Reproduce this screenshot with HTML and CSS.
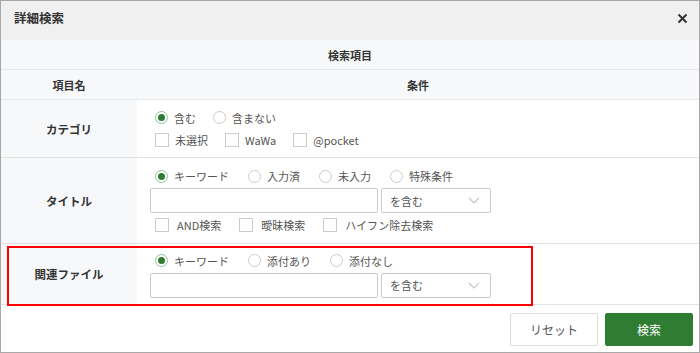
FILE: index.html
```html
<!DOCTYPE html>
<html lang="ja">
<head>
<meta charset="utf-8">
<title>詳細検索</title>
<link rel="stylesheet" href="styles.css">
</head>
<body>
<div class="dialog">
  <div class="dlg-head">
    <span class="dlg-title">詳細検索</span>
    <svg class="close" width="11" height="11" viewBox="0 0 11 11"><path d="M1.5 1.5l8 8M9.5 1.5l-8 8" stroke="#333" stroke-width="2" fill="none"/></svg>
  </div>

  <table class="search">
    <tr class="th-row">
      <th colspan="2">検索項目</th>
    </tr>
    <tr class="th-row">
      <th class="col-name">項目名</th>
      <th>条件</th>
    </tr>
    <tr class="row-cat">
      <td class="label">カテゴリ</td>
      <td class="cond">
        <div class="opts">
          <label class="opt"><span class="radio on"></span>含む</label>
          <label class="opt"><span class="radio"></span>含まない</label>
        </div>
        <div class="opts">
          <label class="opt"><span class="check"></span>未選択</label>
          <label class="opt"><span class="check"></span>WaWa</label>
          <label class="opt"><span class="check"></span>@pocket</label>
        </div>
      </td>
    </tr>
    <tr class="row-title">
      <td class="label">タイトル</td>
      <td class="cond">
        <div class="opts">
          <label class="opt"><span class="radio on"></span>キーワード</label>
          <label class="opt"><span class="radio"></span>入力済</label>
          <label class="opt"><span class="radio"></span>未入力</label>
          <label class="opt"><span class="radio"></span>特殊条件</label>
        </div>
        <div class="field">
          <input class="text" type="text">
          <div class="select">を含む<svg width="12" height="7" viewBox="0 0 12 7"><path d="M1 1l5 5 5-5" stroke="#c4c4c4" stroke-width="1.2" fill="none"/></svg></div>
        </div>
        <div class="opts">
          <label class="opt wide"><span class="check"></span>AND検索</label>
          <label class="opt wide"><span class="check"></span>曖昧検索</label>
          <label class="opt wide"><span class="check"></span>ハイフン除去検索</label>
        </div>
      </td>
    </tr>
    <tr class="row-file">
      <td class="label">関連ファイル</td>
      <td class="cond">
        <div class="opts">
          <label class="opt"><span class="radio on"></span>キーワード</label>
          <label class="opt"><span class="radio"></span>添付あり</label>
          <label class="opt"><span class="radio"></span>添付なし</label>
        </div>
        <div class="field">
          <input class="text" type="text">
          <div class="select">を含む<svg width="12" height="7" viewBox="0 0 12 7"><path d="M1 1l5 5 5-5" stroke="#c4c4c4" stroke-width="1.2" fill="none"/></svg></div>
        </div>
      </td>
    </tr>
  </table>

  <div class="dlg-foot">
    <button class="btn">リセット</button>
    <button class="btn primary">検索</button>
  </div>

  <div class="mark"></div>
</div>
</body>
</html>
```

FILE: styles.css
```css
body{
margin:0;
font-family:"Noto Sans CJK JP","Noto Sans",sans-serif;
font-size:11px;
color:#555;
background:#fff;
}
.dialog{
position:relative;
width:700px;
height:353px;
box-sizing:border-box;
border:1px solid #a8a8a8;
}
.dlg-head{
height:39px;
box-sizing:border-box;
background:#f0f0f0;
display:flex;
justify-content:space-between;
align-items:flex-start;
padding:7px 11px 0 13px;
}
.dlg-title{
font-size:12.5px;
font-weight:bold;
color:#333;
}
.close{
margin-top:5px;
}
.search{
width:100%;
border-collapse:collapse;
}
.search th{
height:29px;
padding:0;
background:#f7f8fa;
border-bottom:1px solid #e6e8eb;
font-weight:bold;
color:#333;
font-size:11px;
}
.col-name{
width:136px;
}
.search td{
border-bottom:1px solid #e2e2e2;
padding:0;
}
.label{
background:#f7f8fa;
text-align:center;
font-weight:bold;
color:#333;
font-size:11.5px;
}
.cond{
padding:0 0 0 13px !important;
}
.row-cat td{height:57px;}
.row-title td{height:85px;}
.row-file td{height:60px;}
.opts{
display:flex;
align-items:center;
height:22px;
padding-left:5px;
}
.opt{
display:flex;
align-items:center;
gap:6px;
margin-right:19px;
}
.row-cat .opt{
margin-right:17px;
}
.opt.wide{
gap:8px;
margin-right:18px;
}
.radio{
width:11px;
height:11px;
border:1px solid #ccc;
border-radius:50%;
box-sizing:content-box;
background:#fff;
position:relative;
}
.radio.on{
border-color:#8fc491;
}
.radio.on::after{
content:"";
position:absolute;
left:2px;
top:2px;
width:7px;
height:7px;
border-radius:50%;
background:#2e7d32;
}
.check{
width:12px;
height:12px;
border:1px solid #ccc;
background:#fff;
}
.field{
display:flex;
gap:3px;
margin:1px 0;
}
.text{
width:228px;
height:25px;
box-sizing:border-box;
border:1px solid #ccc;
border-radius:2px;
margin:0;
}
.select{
width:110px;
height:25px;
box-sizing:border-box;
border:1px solid #ccc;
border-radius:2px;
display:flex;
align-items:center;
justify-content:space-between;
padding:0 10px 0 8px;
color:#555;
}
.dlg-foot{
display:flex;
justify-content:flex-end;
gap:7px;
padding:8px 6px 0 0;
}
.btn{
width:88px;
height:33px;
border:1px solid #ddd;
border-radius:2px;
background:#fff;
color:#555;
font-family:inherit;
font-size:12px;
}
.btn.primary{
background:#2e7d32;
border-color:#2e7d32;
color:#fff;
}
.mark{
position:absolute;
left:6px;
top:245px;
width:522px;
height:56px;
border:2px solid #f00;
}
```
